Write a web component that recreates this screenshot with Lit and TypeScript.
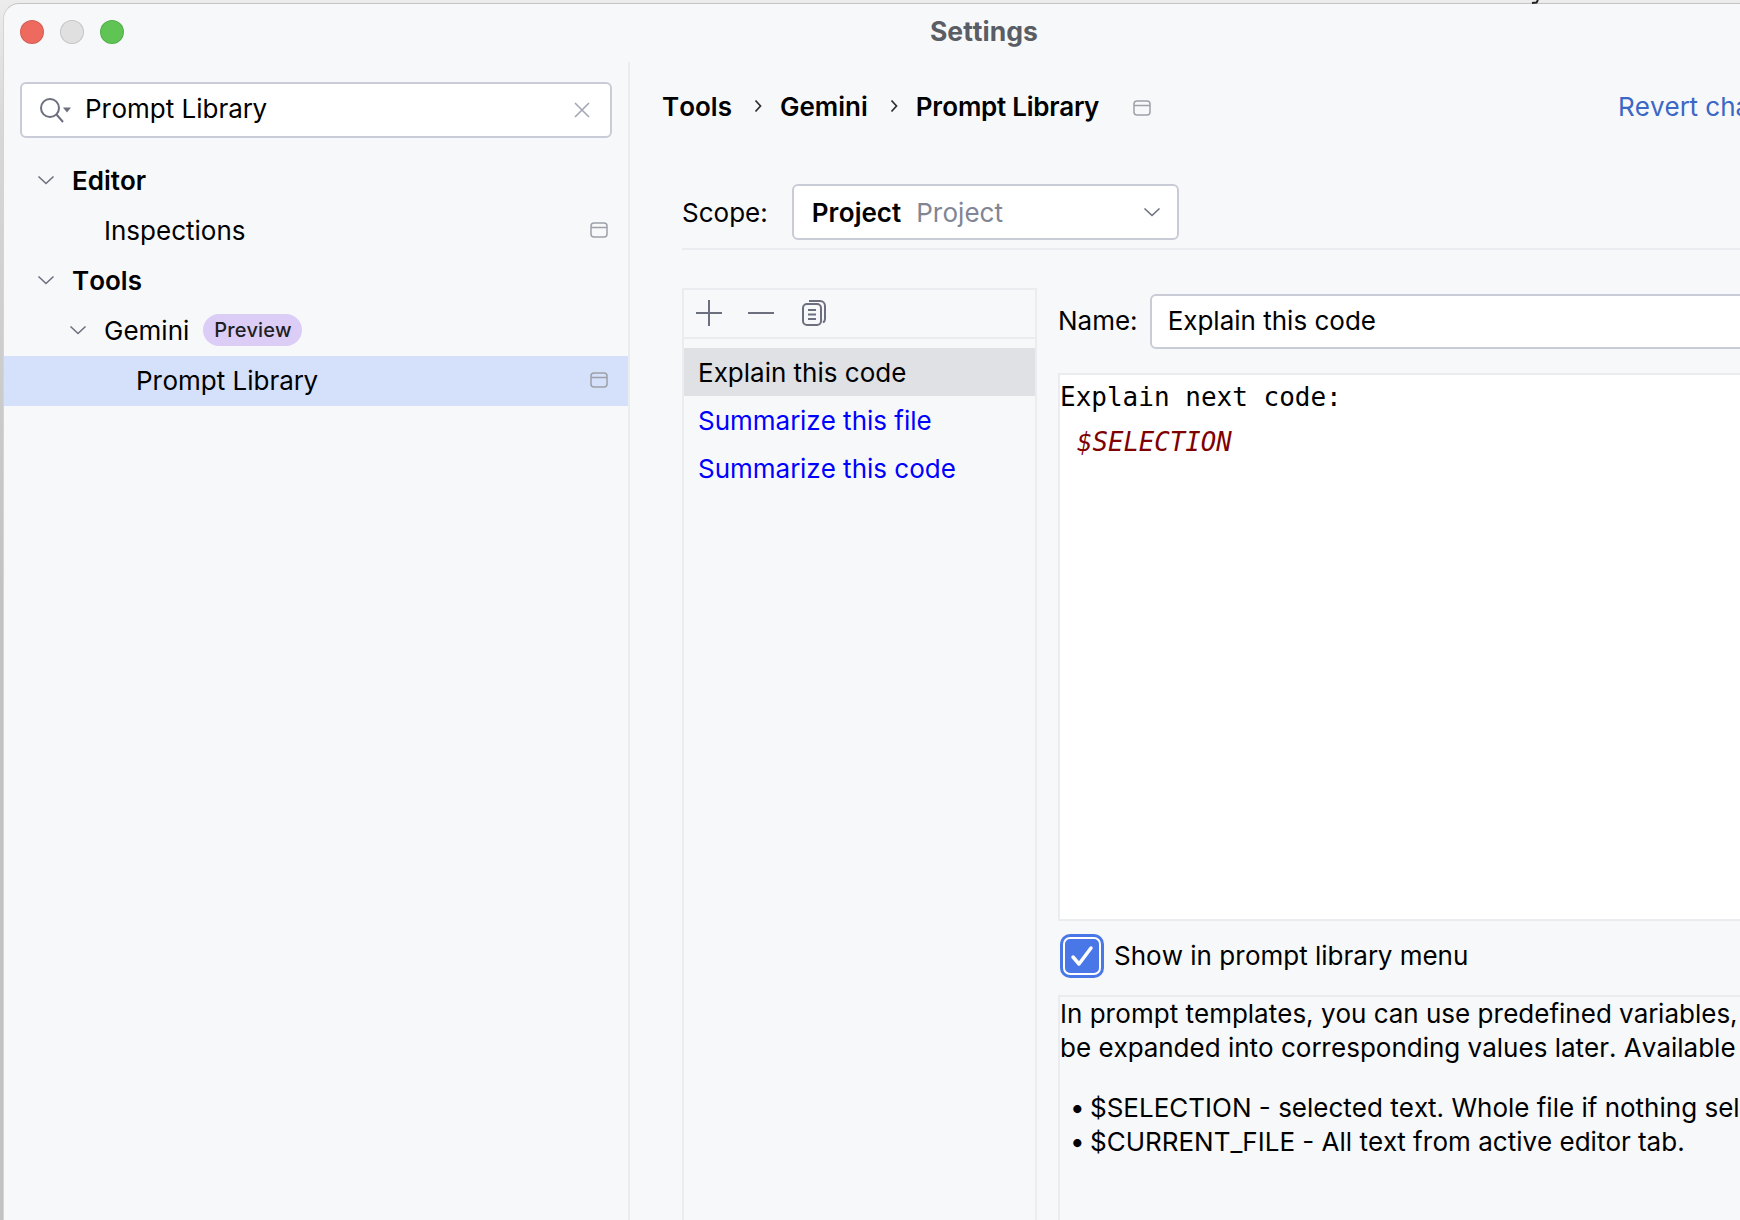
import { LitElement, html, css, svg } from "lit";
import { customElement } from "lit/decorators.js";

// small "project-level settings" marker shown next to several items
const projectIcon = svg`<svg class="proj" width="18" height="16" viewBox="0 0 18 16" fill="none" stroke="#9da0a8" stroke-width="1.5">
  <rect x="1" y="1" width="16" height="14" rx="3"/><path d="M1 5.500h16"/></svg>`;

const chevron = svg`<svg class="chev" width="18" height="10" viewBox="0 0 18 10" fill="none" stroke="#6c707e" stroke-width="1.6">
  <path d="M1.500 1.500 9 8.500l7.500-7"/></svg>`;

const crumbArrow = svg`<svg width="8" height="14" viewBox="0 0 8 14" fill="none" stroke="#2b2d30" stroke-width="1.7"><path d="m1.500 1.500 5 5.500-5 5.500"/></svg>`;

@customElement("app-root")
export class AppRoot extends LitElement {
  static styles = css`
    :host {
      display: block;
      width: 1740px;
      height: 1220px;
      overflow: hidden;
      position: relative;
      background: linear-gradient(#ececec, #d8d8d8 120px, #c2c2c2 600px);
      font-family: Inter, "Liberation Sans", sans-serif;
      font-size: 26px;
      font-kerning: none;
      color: #000;
    }
    /* bit of the window behind, peeking over the top edge */
    .behind {
      position: absolute;
      left: 1531px;
      top: 0;
    }
    .window {
      width: 1800px;
      height: 1240px;
      margin: 3px 0 0 3px;
      border-radius: 16px 0 0 0;
      border-top: 1px solid #c4c4c4;
      border-left: 1px solid #d4d4d4;
      background: #f7f8fa;
      display: flex;
      flex-direction: column;
    }
    .titlebar {
      height: 58px;
      flex: none;
      box-sizing: border-box;
      padding: 0 0 2px 16px;
      display: flex;
      align-items: center;
    }
    .lights {
      display: flex;
      gap: 16px;
    }
    .lights span {
      width: 24px;
      height: 24px;
      border-radius: 50%;
      box-sizing: border-box;
      border: 1px solid rgba(0, 0, 0, 0.12);
    }
    .red { background: #ee6a5f; }
    .grey { background: #e0e0e0; }
    .green { background: #5fc454; }
    .title {
      margin-left: 806px;
      padding-bottom: 2px;
      font-size: 26.500px;
      font-weight: 700;
      color: #5a5d63;
    }
    .body {
      flex: 1;
      display: flex;
      min-height: 0;
    }
    .sidebar {
      width: 624px;
      flex: none;
      border-right: 2px solid #ebecf0;
    }
    .search {
      margin: 20px 16px 0;
      height: 56px;
      box-sizing: border-box;
      background: #fff;
      border: 2px solid #c9ccd6;
      border-radius: 6px;
      display: flex;
      align-items: center;
      padding: 0 20px 0 17px;
    }
    .search .text { margin-left: 12px; flex: 1; padding-bottom: 3px; }
    .tree { margin-top: 17px; }
    .row {
      height: 50px;
      display: flex;
      align-items: center;
      padding-right: 20px;
    }
    .row.selected { background: #d5e1fa; margin-top: 1px; padding-bottom: 2px; box-sizing: border-box; }
    .row .label { flex: none; }
    .row .bold { font-weight: 600; }
    .row .spacer { flex: 1; }
    .twist { width: 18px; margin-right: 17px; display: flex; flex: none; }
    .depth0 { padding-left: 33px; }
    .depth1 { padding-left: 65px; }
    .depth1-leaf { padding-left: 100px; }
    .depth2-leaf { padding-left: 132px; }
    .badge {
      margin-left: 14px;
      height: 32px;
      padding: 0 11px;
      border-radius: 16px;
      background: #dccdf6;
      font-size: 20px;
      font-weight: 500;
      line-height: 32px;
      color: #1e1f22;
    }
    .main {
      flex: 1;
      min-width: 0;
      padding: 0 0 0 32px;
    }
    .head {
      height: 52px;
      margin-top: 18px;
      margin-bottom: 1px;
      display: flex;
      align-items: center;
      font-weight: 600;
      white-space: nowrap;
    }
    .crumb-sep {
      width: 48px;
      padding-left: 4px;
      box-sizing: border-box;
      display: flex;
      justify-content: center;
      flex: none;
    }
    .head .last { letter-spacing: -0.25px; }
    .head .proj { margin: 3px 0 0 34px; flex: none; }
    .revert {
      margin-left: 467px;
      font-weight: 400;
      color: #3b67c5;
    }
    .content { padding-left: 20px; }
    .scope {
      display: flex;
      align-items: center;
      margin-top: 52px;
      padding-bottom: 8px;
      border-bottom: 2px solid #ebecf0;
    }
    .scope .combo {
      margin-left: 24px;
      width: 387px;
      height: 56px;
      box-sizing: border-box;
      background: #fff;
      border: 2px solid #c9ccd6;
      border-radius: 6px;
      display: flex;
      align-items: center;
      padding: 0 16px 0 18px;
    }
    .combo b { font-weight: 600; }
    .combo .dim { color: #818594; margin-left: 15px; flex: 1; }
    .split {
      margin-top: 38px;
      display: flex;
    }
    .list {
      width: 355px;
      height: 1000px;
      flex: none;
      box-sizing: border-box;
      border: 2px solid #ebecf0;
      border-bottom: none;
    }
    .toolbar {
      height: 49px;
      box-sizing: border-box;
      border-bottom: 2px solid #ebecf0;
      display: flex;
      align-items: center;
      padding: 0 0 2px 11px;
      gap: 24px;
      margin-bottom: 9px;
    }
    .toolbar .copy { margin-left: 2px; }
    .item {
      height: 48px;
      line-height: 50px;
      padding-left: 14px;
      color: #0000ff;
    }
    .item.on { background: #dfe1e5; color: #000; }
    .detail {
      flex: 1;
      min-width: 0;
      padding-left: 21px;
      white-space: nowrap;
    }
    .name {
      display: flex;
      align-items: center;
      margin-top: 6px;
    }
    .name > span { padding-bottom: 2px; }
    .name .field {
      margin-left: 12px;
      flex: 1;
      height: 55px;
      box-sizing: border-box;
      background: #fff;
      border: 2px solid #c9ccd6;
      border-radius: 6px 0 0 6px;
      display: flex;
      align-items: center;
      padding: 0 0 2px 16px;
    }
    .editor {
      margin-top: 24px;
      height: 548px;
      box-sizing: border-box;
      background: #fff;
      border: 2px solid #ebecf0;
      font-family: "DejaVu Sans Mono", "Liberation Mono", monospace;
      font-size: 26px;
      line-height: 45px;
    }
    .editor .var {
      display: block;
      padding-left: 17px;
      color: #7f0000;
      font-size: 25.700px;
      font-style: italic;
    }
    .check {
      display: flex;
      align-items: center;
      margin-top: 13px;
      height: 44px;
      padding-left: 2px;
    }
    .check > span { padding-bottom: 2px; }
    .box {
      width: 44px;
      height: 44px;
      box-sizing: border-box;
      border-radius: 10px;
      background: #4a77e8;
      padding: 3px;
      margin-right: 10px;
    }
    .box div {
      width: 100%;
      height: 100%;
      box-sizing: border-box;
      border: 2px solid #fff;
      border-radius: 7px;
      display: flex;
      align-items: center;
      justify-content: center;
    }
    .help {
      margin-top: 17px;
      border-top: 2px solid #ebecf0;
      border-left: 2px solid #ebecf0;
      height: 300px;
      line-height: 34px;
    }
    .help ul {
      list-style: none;
      margin: 26px 0 0;
      padding: 0 0 0 10px;
    }
    .help li::before {
      content: "•";
      display: inline-block;
      width: 20px;
    }
  `;

  render() {
    return html`
      <svg class="behind" width="10" height="4" viewBox="0 0 10 4" fill="none" stroke="#222" stroke-width="2"><path d="M7 0 5.500 2.500 1 3"/></svg>
      <div class="window">
        <div class="titlebar">
          <div class="lights">
            <span class="red"></span><span class="grey"></span><span class="green"></span>
          </div>
          <div class="title">Settings</div>
        </div>
        <div class="body">
          <aside class="sidebar">
            <div class="search">
              <svg width="34" height="26" viewBox="0 0 34 26" fill="none" stroke="#6c707e" stroke-width="2">
                <circle cx="11" cy="11" r="9"/><path d="M17.500 17.500 24 25"/>
                <path d="M24 10.500h8l-4 5z" fill="#6c707e" stroke="none"/>
              </svg>
              <span class="text">Prompt Library</span>
              <svg width="16" height="16" viewBox="0 0 16 16" fill="none" stroke="#a4a8b4" stroke-width="1.6">
                <path d="M1 1l14 14M15 1 1 15"/>
              </svg>
            </div>
            <div class="tree">
              <div class="row depth0"><span class="twist">${chevron}</span><span class="label bold">Editor</span></div>
              <div class="row depth1-leaf"><span class="label">Inspections</span><span class="spacer"></span>${projectIcon}</div>
              <div class="row depth0"><span class="twist">${chevron}</span><span class="label bold">Tools</span></div>
              <div class="row depth1"><span class="twist">${chevron}</span><span class="label">Gemini</span><span class="badge">Preview</span></div>
              <div class="row depth2-leaf selected"><span class="label">Prompt Library</span><span class="spacer"></span>${projectIcon}</div>
            </div>
          </aside>
          <main class="main">
            <div class="head">
              <span>Tools</span>
              <span class="crumb-sep">${crumbArrow}</span>
              <span>Gemini</span>
              <span class="crumb-sep">${crumbArrow}</span>
              <span class="last">Prompt Library</span>
              ${projectIcon}
              <span class="revert">Revert changes</span>
            </div>
            <div class="content">
              <div class="scope">
                <span>Scope:</span>
                <div class="combo"><b>Project</b><span class="dim">Project</span>${chevron}</div>
              </div>
              <div class="split">
                <div class="list">
                  <div class="toolbar">
                    <svg width="28" height="28" viewBox="0 0 28 28" stroke="#6c707e" stroke-width="2"><path d="M14 1v26M1 14h26"/></svg>
                    <svg width="28" height="28" viewBox="0 0 28 28" stroke="#6c707e" stroke-width="2"><path d="M1 14h26"/></svg>
                    <svg class="copy" width="26" height="28" viewBox="0 0 26 28" fill="none" stroke="#6c707e" stroke-width="2">
                      <rect x="2" y="5" width="18" height="21" rx="4"/><path d="M7 11h8M7 15.500h8M7 20h8"/>
                      <path d="M8 2h11a5 5 0 0 1 5 5v13a4 4 0 0 1-2 3.500"/>
                    </svg>
                  </div>
                  <div class="item on">Explain this code</div>
                  <div class="item">Summarize this file</div>
                  <div class="item">Summarize this code</div>
                </div>
                <div class="detail">
                  <div class="name">
                    <span>Name:</span>
                    <div class="field">Explain this code</div>
                  </div>
                  <div class="editor">Explain next code:<span class="var">$SELECTION</span></div>
                  <div class="check">
                    <div class="box"><div>
                      <svg width="24" height="22" viewBox="0 0 24 22" fill="none" stroke="#fff" stroke-width="3.500" stroke-linecap="round" stroke-linejoin="round"><path d="m3 12 6 7L21 3"/></svg>
                    </div></div>
                    <span>Show in prompt library menu</span>
                  </div>
                  <div class="help">
                    In prompt templates, you can use predefined variables, which will<br />
                    be expanded into corresponding values later. Available variables:
                    <ul>
                      <li>$SELECTION - selected text. Whole file if nothing selected.</li>
                      <li>$CURRENT_FILE - All text from active editor tab.</li>
                    </ul>
                  </div>
                </div>
              </div>
            </div>
          </main>
        </div>
      </div>
    `;
  }
}

declare global {
  interface HTMLElementTagNameMap {
    "app-root": AppRoot;
  }
}
